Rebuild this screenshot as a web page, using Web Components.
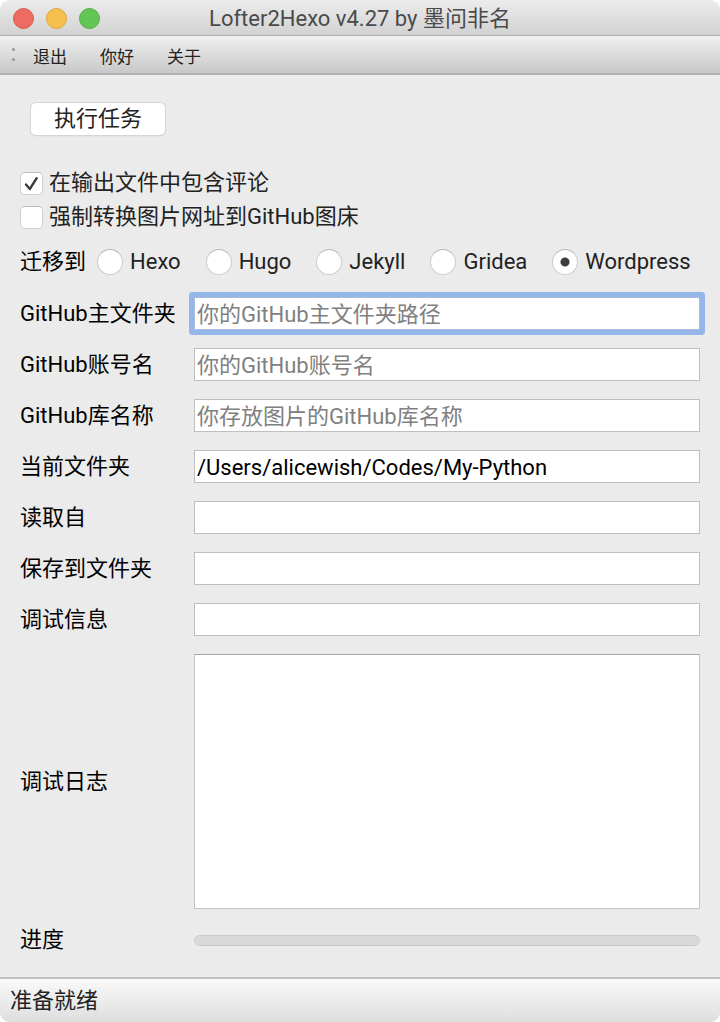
<!DOCTYPE html>
<html lang="zh-CN">
<head>
    <meta charset="utf-8">
    <meta name="viewport" content="width=device-width, initial-scale=1">
    <title>Lofter2Hexo v4.27 by 墨问非名</title>
    <style>
        body {
            margin: 0;
            background: #fff;
            color: #000;
            font: 22px/26px Roboto, "Noto Sans CJK SC", sans-serif;
        }
    </style>
</head>
<body>
    <app-window>
        <title-bar slot="header">Lofter2Hexo v4.27 by 墨问非名</title-bar>
        <tool-bar slot="header" items="退出,你好,关于"></tool-bar>

        <push-button>执行任务</push-button>
        <option-list>
            <check-option checked>在输出文件中包含评论</check-option>
            <check-option>强制转换图片网址到GitHub图床</check-option>
        </option-list>
        <radio-group label="迁移到" options="Hexo,Hugo,Jekyll,Gridea,Wordpress" value="Wordpress"></radio-group>
        <text-field label="GitHub主文件夹" placeholder="你的GitHub主文件夹路径" active></text-field>
        <text-field label="GitHub账号名" placeholder="你的GitHub账号名"></text-field>
        <text-field label="GitHub库名称" placeholder="你存放图片的GitHub库名称"></text-field>
        <text-field label="当前文件夹" value="/Users/alicewish/Codes/My-Python"></text-field>
        <text-field label="读取自"></text-field>
        <text-field label="保存到文件夹"></text-field>
        <text-field label="调试信息"></text-field>
        <log-field label="调试日志"></log-field>
        <progress-field label="进度"></progress-field>

        <status-bar slot="footer">准备就绪</status-bar>
    </app-window>

    <script>
        // shared by the three kinds of labelled rows
        const rowStyles = `
            :host {
                display: grid;
                grid-template-columns: 174px minmax(0, 1fr);
                align-items: center;
            }
            label {
                white-space: nowrap;
            }
        `;

        class AppWindow extends HTMLElement {
            constructor() {
                super();
                this.attachShadow({ mode: 'open' });
                this.shadowRoot.innerHTML = `
                    <style>
                        :host {
                            display: flex;
                            flex-direction: column;
                            min-height: 100vh;
                            background: #ebebeb;
                            border-radius: 10px;
                            overflow: hidden;
                        }
                        main {
                            flex: 1;
                            display: flex;
                            flex-direction: column;
                            gap: 18px;
                            padding: 28px 20px 24px;
                        }
                    </style>
                    <slot name="header"></slot>
                    <main><slot></slot></main>
                    <slot name="footer"></slot>
                `;
            }
        }

        class TitleBar extends HTMLElement {
            constructor() {
                super();
                this.attachShadow({ mode: 'open' });
                this.shadowRoot.innerHTML = `
                    <style>
                        :host {
                            display: grid;
                            grid-template-columns: 1fr auto 1fr;
                            align-items: center;
                            height: 35px;
                            padding: 0 13px;
                            border-bottom: 1px solid #aeaeae;
                            background: linear-gradient(#ececec, #d2d2d2);
                            color: #4a4a4a;
                        }
                        .lights {
                            display: flex;
                            gap: 12px;
                            padding-top: 1px;
                        }
                        button {
                            box-sizing: border-box;
                            width: 21px;
                            height: 21px;
                            padding: 0;
                            border: 1px solid #d9574d;
                            border-radius: 50%;
                            background: #ed6b60;
                        }
                        .minimize {
                            border-color: #dba43b;
                            background: #f5bf4f;
                        }
                        .zoom {
                            border-color: #51ab41;
                            background: #62c655;
                        }
                        h1 {
                            margin: 0;
                            padding-top: 2px;
                            font: inherit;
                        }
                    </style>
                    <div class="lights">
                        <button class="close" aria-label="关闭"></button>
                        <button class="minimize" aria-label="最小化"></button>
                        <button class="zoom" aria-label="缩放"></button>
                    </div>
                    <h1><slot></slot></h1>
                `;
            }
        }

        class ToolBar extends HTMLElement {
            constructor() {
                super();
                this.attachShadow({ mode: 'open' });
                this.shadowRoot.innerHTML = `
                    <style>
                        :host {
                            display: flex;
                            align-items: center;
                            gap: 33px;
                            height: 37px;
                            padding: 0 12px;
                            border-bottom: 2px solid #b2b2b2;
                            background: linear-gradient(#f0f0f0, #c8c8c8);
                        }
                        .grip {
                            display: grid;
                            gap: 7px;
                            margin-right: -15px;
                        }
                        .grip i {
                            width: 3px;
                            height: 3px;
                            border-radius: 50%;
                            background: #989898;
                        }
                        button {
                            padding: 4px 0 0;
                            border: 0;
                            background: none;
                            color: #222;
                            font: inherit;
                            font-size: 17px;
                        }
                    </style>
                    <span class="grip"><i></i><i></i></span>
                `;
            }

            connectedCallback() {
                this.getAttribute('items').split(',').forEach(item => {
                    const button = document.createElement('button');
                    button.textContent = item;
                    this.shadowRoot.append(button);
                });
            }
        }

        class PushButton extends HTMLElement {
            constructor() {
                super();
                this.attachShadow({ mode: 'open' });
                this.shadowRoot.innerHTML = `
                    <style>
                        :host {
                            display: block;
                            padding-left: 11px;
                        }
                        button {
                            display: block;
                            height: 32px;
                            padding: 0 23px;
                            border: 0;
                            border-radius: 5px;
                            background: #fff;
                            box-shadow: 0 0 0 1px #d6d6d6, 0 1px 1px 0 #aaa;
                            color: #222;
                            font: inherit;
                        }
                    </style>
                    <button><slot></slot></button>
                `;
            }
        }

        class OptionList extends HTMLElement {
            constructor() {
                super();
                this.attachShadow({ mode: 'open' });
                this.shadowRoot.innerHTML = `
                    <style>
                        :host {
                            display: flex;
                            flex-direction: column;
                            gap: 8px;
                            padding: 17px 0 1px;
                        }
                    </style>
                    <slot></slot>
                `;
            }
        }

        class CheckOption extends HTMLElement {
            constructor() {
                super();
                this.attachShadow({ mode: 'open' });
                this.shadowRoot.innerHTML = `
                    <style>
                        :host {
                            display: block;
                            color: #222;
                        }
                        label {
                            display: flex;
                            align-items: center;
                            gap: 6px;
                        }
                        .box {
                            display: grid;
                            flex: none;
                        }
                        .box > * {
                            grid-area: 1 / 1;
                        }
                        input {
                            appearance: none;
                            box-sizing: border-box;
                            width: 23px;
                            height: 23px;
                            margin: 0;
                            border: 1px solid #d0d0d0;
                            border-top-color: #bdbdbd;
                            border-radius: 5px;
                            background: #fff;
                        }
                        svg {
                            width: 23px;
                            height: 23px;
                            visibility: hidden;
                            pointer-events: none;
                        }
                        input:checked + svg {
                            visibility: visible;
                        }
                    </style>
                    <label>
                        <span class="box">
                            <input type="checkbox">
                            <svg viewBox="0 0 23 23" fill="none" stroke="#3c3c3c" stroke-width="2.4" stroke-linecap="round" stroke-linejoin="round">
                                <path d="M6 12.5 9.8 17 16.7 6.2"/>
                            </svg>
                        </span>
                        <span><slot></slot></span>
                    </label>
                `;
            }

            connectedCallback() {
                this.shadowRoot.querySelector('input').checked = this.hasAttribute('checked');
            }
        }

        class RadioGroup extends HTMLElement {
            constructor() {
                super();
                this.attachShadow({ mode: 'open' });
                this.shadowRoot.innerHTML = `
                    <style>
                        :host {
                            display: block;
                            padding-bottom: 4px;
                        }
                        .group {
                            display: flex;
                            align-items: center;
                            gap: 25px;
                            white-space: nowrap;
                        }
                        .caption {
                            margin-right: -14px;
                        }
                        label {
                            display: flex;
                            align-items: center;
                            gap: 7px;
                            color: #222;
                        }
                        input {
                            appearance: none;
                            box-sizing: border-box;
                            width: 26px;
                            height: 26px;
                            margin: 0;
                            border: 1px solid #cdcdcd;
                            border-top-color: #b8b8b8;
                            border-radius: 50%;
                            background: #fff;
                        }
                        input:checked {
                            background: radial-gradient(circle, #3c3c3c 4px, #fff 5px);
                        }
                    </style>
                    <div class="group" role="radiogroup" aria-labelledby="caption">
                        <span class="caption" id="caption"></span>
                    </div>
                `;
            }

            connectedCallback() {
                const group = this.shadowRoot.querySelector('.group');
                this.shadowRoot.getElementById('caption').textContent = this.getAttribute('label');
                this.getAttribute('options').split(',').forEach(option => {
                    const label = document.createElement('label');
                    const input = document.createElement('input');
                    input.type = 'radio';
                    input.name = 'target';
                    input.value = option;
                    input.checked = option === this.getAttribute('value');
                    label.append(input, option);
                    group.append(label);
                });
            }
        }

        class TextField extends HTMLElement {
            constructor() {
                super();
                this.attachShadow({ mode: 'open' });
                this.shadowRoot.innerHTML = `
                    <style>
                        ${rowStyles}
                        input {
                            box-sizing: border-box;
                            width: 100%;
                            height: 33px;
                            margin: 0;
                            padding: 1px 2px 0;
                            border: 1px solid #bfbfbf;
                            border-radius: 0;
                            outline: 0;
                            background: #fff;
                            color: #000;
                            font: inherit;
                        }
                        input::placeholder {
                            color: #808080;
                        }
                        input:focus,
                        :host([active]) input {
                            border-color: #a9bbd8;
                            border-radius: 1px;
                            box-shadow: 0 0 0 5px #94b6e9;
                        }
                    </style>
                    <label for="field"></label>
                    <input type="text" id="field">
                `;
            }

            connectedCallback() {
                const input = this.shadowRoot.getElementById('field');
                this.shadowRoot.querySelector('label').textContent = this.getAttribute('label');
                input.placeholder = this.getAttribute('placeholder') || '';
                input.value = this.getAttribute('value') || '';
            }
        }

        class LogField extends HTMLElement {
            constructor() {
                super();
                this.attachShadow({ mode: 'open' });
                this.shadowRoot.innerHTML = `
                    <style>
                        ${rowStyles}
                        :host {
                            flex: 1;
                            min-height: 120px;
                        }
                        textarea {
                            box-sizing: border-box;
                            width: 100%;
                            height: 100%;
                            margin: 0;
                            padding: 4px;
                            border: 1px solid #c4c4c4;
                            border-top-color: #a6a6a6;
                            border-radius: 0;
                            outline: 0;
                            background: #fff;
                            font: inherit;
                            resize: none;
                        }
                    </style>
                    <label for="log"></label>
                    <textarea id="log"></textarea>
                `;
            }

            connectedCallback() {
                this.shadowRoot.querySelector('label').textContent = this.getAttribute('label');
            }
        }

        class ProgressField extends HTMLElement {
            constructor() {
                super();
                this.attachShadow({ mode: 'open' });
                this.shadowRoot.innerHTML = `
                    <style>
                        ${rowStyles}
                        progress {
                            appearance: none;
                            box-sizing: border-box;
                            width: 100%;
                            height: 11px;
                            border: 1px solid #c8c8c8;
                            border-radius: 6px;
                            background: #d9d9d9;
                            overflow: hidden;
                        }
                        progress::-webkit-progress-bar {
                            background: #d9d9d9;
                        }
                        progress::-webkit-progress-value {
                            background: #4a90e2;
                        }
                    </style>
                    <label for="progress"></label>
                    <progress id="progress" value="0" max="100"></progress>
                `;
            }

            connectedCallback() {
                this.shadowRoot.querySelector('label').textContent = this.getAttribute('label');
            }
        }

        class StatusBar extends HTMLElement {
            constructor() {
                super();
                this.attachShadow({ mode: 'open' });
                this.shadowRoot.innerHTML = `
                    <style>
                        :host {
                            display: block;
                            padding: 9px 10px 8px;
                            border-top: 2px solid #c0c0c0;
                            background: linear-gradient(#fafafa, #dedede);
                            color: #222;
                        }
                    </style>
                    <slot></slot>
                `;
            }
        }

        customElements.define('app-window', AppWindow);
        customElements.define('title-bar', TitleBar);
        customElements.define('tool-bar', ToolBar);
        customElements.define('push-button', PushButton);
        customElements.define('option-list', OptionList);
        customElements.define('check-option', CheckOption);
        customElements.define('radio-group', RadioGroup);
        customElements.define('text-field', TextField);
        customElements.define('log-field', LogField);
        customElements.define('progress-field', ProgressField);
        customElements.define('status-bar', StatusBar);
    </script>
</body>
</html>
